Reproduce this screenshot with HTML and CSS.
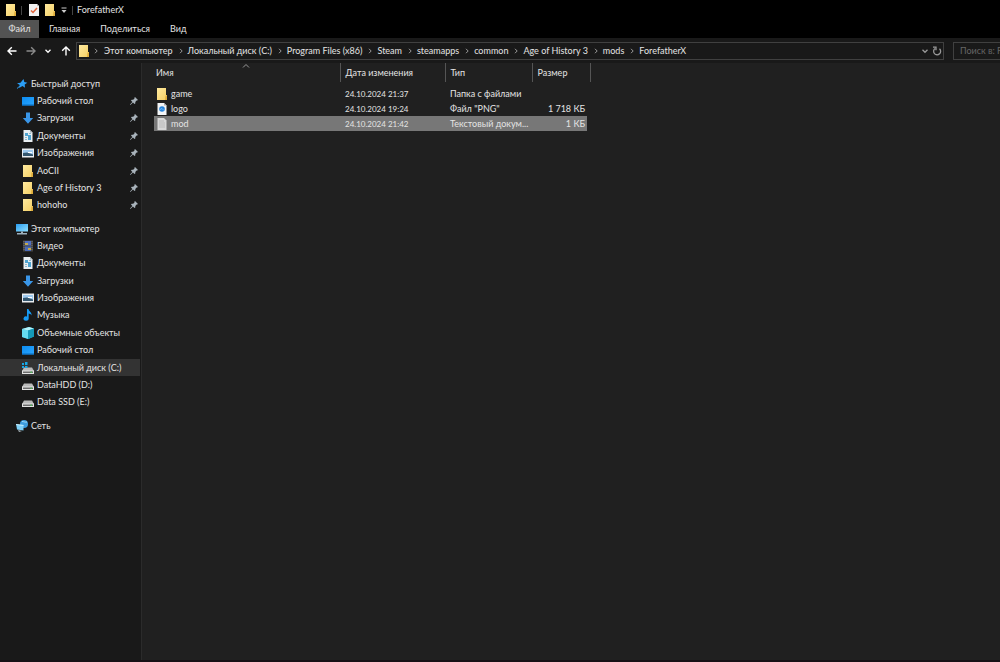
FILE: index.html
```html
<!DOCTYPE html>
<html lang="ru">
<head>
<meta charset="utf-8">
<title>ForefatherX</title>
<link rel="stylesheet" href="styles.css">
</head>
<body>
<svg class="defs" aria-hidden="true">
  <defs>
    <linearGradient id="gf" x1="0" y1="0" x2="1" y2="1"><stop offset="0" stop-color="#ffeaa0"/><stop offset="1" stop-color="#f5cf62"/></linearGradient>
    <linearGradient id="gb" x1="0" y1="0" x2="1" y2="1"><stop offset="0" stop-color="#0c8cf0"/><stop offset="1" stop-color="#2aa5ff"/></linearGradient>
    <linearGradient id="gm" x1="0" y1="0" x2="1" y2="1"><stop offset="0" stop-color="#2a9df0"/><stop offset="1" stop-color="#8fe0ff"/></linearGradient>
  </defs>
  <symbol id="folder" viewBox="0 0 12 12"><path d="M1 0h9v7h1v5H1z" fill="url(#gf)"/><path d="M9.500 7.500H11V12H9z" fill="#e0ae3c"/></symbol>
  <symbol id="check" viewBox="0 0 12 12"><path d="M1 0h8l2 2v10H1z" fill="#f1f1f1"/><path d="M9 0l2 2H9z" fill="#bbb"/><path d="M3 6.500l2 2 4-4.500" fill="none" stroke="#e2643c" stroke-width="1.500"/></symbol>
  <symbol id="star" viewBox="0 0 12 12"><path d="M7.500 1l.8 3 3 .7-2.600 1.800.3 3.200-2.500-1.700L3 10l.8-3L1 5.200l3.500-.5z" fill="#2b9df4"/><path d="M1 10.500l4-3.500" stroke="#2b9df4"/></symbol>
  <symbol id="desktop" viewBox="0 0 12 12"><path d="M0 2h12v8.500H0z" fill="url(#gb)"/><path d="M0 9.500h12v1H0z" fill="#0567b8"/></symbol>
  <symbol id="down" viewBox="0 0 12 12"><path d="M4 .5h4V6h3.200L6 11.800.8 6H4z" fill="#3a96e8"/></symbol>
  <symbol id="doc" viewBox="0 0 12 12"><path d="M1.500 0H8l2.500 2.500V12h-9z" fill="#e9eef1"/><path d="M8 0l2.500 2.500H8z" fill="#a9b4ba"/><path d="M3 3h3v3H3zM6 5h3v5H6z" fill="#4fa3cf"/><path d="M3 7.500h2M3 9.500h2M7 3.500h2" stroke="#8db7cb"/></symbol>
  <symbol id="image" viewBox="0 0 12 12"><path d="M0 1.500h12v9H0z" fill="#e9edf1"/><path d="M1 3h10v6H1z" fill="#9ec9ee"/><path d="M1 6l4-.5 6 2V9H1z" fill="#34566e"/><path d="M6 5h4v1H6z" fill="#fff"/></symbol>
  <symbol id="monitor" viewBox="0 0 12 12"><path d="M0 1h12v7.500H0z" fill="url(#gm)"/><path d="M5 8.500h2V10h4v1.500H1V10h4z" fill="#9eb1bd"/></symbol>
  <symbol id="video" viewBox="0 0 12 12"><path d="M1 .5h10v11H1z" fill="#454545"/><path d="M3 1h6v4.500H3z" fill="#4f6fc2"/><path d="M3 6.500h6V11H3z" fill="#4969b6"/><path d="M3 3h3v2H3zM6 8h3v2H6z" fill="#c5aa4b"/><path d="M2 1v10M10 1v10" stroke="#888" stroke-dasharray="1 1" stroke-width=".7"/></symbol>
  <symbol id="music" viewBox="0 0 12 12"><path d="M5 0h1.500c.3 2.500 3.500 3 3 6.500C9 5 7.500 4.700 6.700 4.500V9.500A2.600 2.200 0 1 1 5 7.600z" fill="#169bf5"/></symbol>
  <symbol id="cube" viewBox="0 0 12 12"><path d="M0 2l7-2 5 1.500v8L6.500 12 0 10z" fill="#25a8c8"/><path d="M0 2l6 1.500V12L0 10z" fill="#65dcf0"/><path d="M0 2l7-2 5 1.500-6 2z" fill="#b5f2fa"/><path d="M6 3.500l6-2v8L6 12z" fill="#159ab9"/></symbol>
  <symbol id="disk" viewBox="0 0 12 12"><path d="M2 4.500h8L12 8H0z" fill="#b9b9b9"/><path d="M0 7.500h12V11H0z" fill="#e2e2e2"/><path d="M1 8.500h10V10H1z" fill="#6c6c6c"/><path d="M8.500 8.500H10V10H8.500z" fill="#4db857"/></symbol>
  <symbol id="sysdisk" viewBox="0 0 12 12"><use href="#disk" width="12" height="12" y="1"/><path d="M0 1h2v2H0zM3 0h2.500v3H3zM0 4h2v2H0zM3 4h2.500v2H3z" fill="#17a7e5"/></symbol>
  <symbol id="network" viewBox="0 0 12 12"><circle cx="8" cy="4" r="4" fill="#3e9ddd"/><path d="M6 1.500c2 0 3 1 5 .5" stroke="#a5ddf8" fill="none"/><path d="M0 4l7.500 1v5.500L1 9.500z" fill="#7fd0f7"/><path d="M0 4l7.500 1v1L0 5z" fill="#c5edfc"/><path d="M2 10l4 1-3 1z" fill="#a8b4ba"/></symbol>
  <symbol id="png" viewBox="0 0 12 12"><path d="M1.500 0H8l2.500 2.500V12h-9z" fill="#f3f5f7"/><path d="M8 0l2.500 2.500H8z" fill="#aaa"/><circle cx="6" cy="6" r="2.800" fill="#2684dd"/><path d="M4 6.500l2-1 2 2" stroke="#6db8f8" fill="none"/></symbol>
  <symbol id="txt" viewBox="0 0 12 12"><path d="M1.500 0H8l2.500 2.500V12h-9z" fill="#d8d8d8"/><path d="M3 3h5M3 5h6M3 7h6M3 9h6" stroke="#b0b0b0" stroke-width=".7"/></symbol>
  <symbol id="pin" viewBox="0 0 8 8"><path d="M5 0l3 3-1 .6-.4-.1-1.300 1.400v1.500l-.8.700-1.500-1.600L.4 8 0 7.600 2.400 5 1 3.500l.7-.8h1.500L4.500 1.400 4.400.8z" fill="#a9b3bb"/></symbol>
  <symbol id="chev" viewBox="0 0 8 8"><path d="M3 1.800L5.200 4 3 6.200" fill="none" stroke="currentColor"/></symbol>
  <symbol id="vee" viewBox="0 0 8 8"><path d="M1.500 2.800L4 5.300l2.500-2.500" fill="none" stroke="currentColor" stroke-width="1.300"/></symbol>
  <symbol id="arrow" viewBox="0 0 10 10"><path d="M9.500 5H1M4.800 1.200L1 5l3.800 3.800" fill="none" stroke="currentColor" stroke-width="1.400"/></symbol>
</svg>

<div class="window">
  <header class="titlebar">
    <svg class="icon"><use href="#folder"/></svg>
    <span class="divider"></span>
    <button class="tool" aria-label="Свойства"><svg class="icon"><use href="#check"/></svg></button>
    <button class="tool" aria-label="Новая папка"><svg class="icon"><use href="#folder"/></svg></button>
    <button class="tool" aria-label="Настройка панели"><svg class="mini" viewBox="0 0 8 8"><path d="M1.500 2h5" stroke="#ccc"/><path d="M1.500 4h5L4 7z" fill="#ccc"/></svg></button>
    <span class="divider"></span>
    <h1 class="title">ForefatherX</h1>
  </header>

  <nav class="tabs">
    <button class="tab tab-file">Файл</button>
    <button class="tab">Главная</button>
    <button class="tab">Поделиться</button>
    <button class="tab">Вид</button>
  </nav>

  <div class="navrow">
    <div class="history">
      <button class="tool" aria-label="Назад"><svg class="arrow"><use href="#arrow"/></svg></button>
      <button class="tool dim" aria-label="Вперед"><svg class="arrow forward"><use href="#arrow"/></svg></button>
      <button class="tool recent" aria-label="Последние расположения"><svg class="mini"><use href="#vee"/></svg></button>
      <button class="tool" aria-label="Вверх"><svg class="arrow up"><use href="#arrow"/></svg></button>
    </div>
    <div class="address">
      <svg class="icon"><use href="#folder"/></svg>
      <ol class="crumbs">
        <li><svg class="mini"><use href="#chev"/></svg><a href="#">Этот компьютер</a></li>
        <li><svg class="mini"><use href="#chev"/></svg><a href="#">Локальный диск (C:)</a></li>
        <li><svg class="mini"><use href="#chev"/></svg><a href="#">Program Files (x86)</a></li>
        <li><svg class="mini"><use href="#chev"/></svg><a href="#">Steam</a></li>
        <li><svg class="mini"><use href="#chev"/></svg><a href="#">steamapps</a></li>
        <li><svg class="mini"><use href="#chev"/></svg><a href="#">common</a></li>
        <li><svg class="mini"><use href="#chev"/></svg><a href="#">Age of History 3</a></li>
        <li><svg class="mini"><use href="#chev"/></svg><a href="#">mods</a></li>
        <li><svg class="mini"><use href="#chev"/></svg><a href="#">ForefatherX</a></li>
      </ol>
      <button class="tool dim" aria-label="Предыдущие расположения"><svg class="mini"><use href="#vee"/></svg></button>
      <button class="tool dim" aria-label="Обновить"><svg class="refresh" viewBox="0 0 10 10"><path d="M3 2.500a3.500 3.500 0 1 0 4.500.2M1 1.200h3v3" fill="none" stroke="currentColor" stroke-width="1.300"/></svg></button>
    </div>
    <input class="search" type="text" aria-label="Поиск" placeholder="Поиск в: ForefatherX">
  </div>

  <div class="body">
    <aside class="sidebar">
      <ul class="group group-quick">
        <li><a class="place root" href="#"><svg class="icon"><use href="#star"/></svg>Быстрый доступ</a></li>
        <li><a class="place" href="#"><svg class="icon"><use href="#desktop"/></svg>Рабочий стол<svg class="pin"><use href="#pin"/></svg></a></li>
        <li><a class="place" href="#"><svg class="icon"><use href="#down"/></svg>Загрузки<svg class="pin"><use href="#pin"/></svg></a></li>
        <li><a class="place" href="#"><svg class="icon"><use href="#doc"/></svg>Документы<svg class="pin"><use href="#pin"/></svg></a></li>
        <li><a class="place" href="#"><svg class="icon"><use href="#image"/></svg>Изображения<svg class="pin"><use href="#pin"/></svg></a></li>
        <li><a class="place" href="#"><svg class="icon"><use href="#folder"/></svg>AoCII<svg class="pin"><use href="#pin"/></svg></a></li>
        <li><a class="place" href="#"><svg class="icon"><use href="#folder"/></svg>Age of History 3<svg class="pin"><use href="#pin"/></svg></a></li>
        <li><a class="place" href="#"><svg class="icon"><use href="#folder"/></svg>hohoho<svg class="pin"><use href="#pin"/></svg></a></li>
      </ul>
      <ul class="group group-pc">
        <li><a class="place root" href="#"><svg class="icon"><use href="#monitor"/></svg>Этот компьютер</a></li>
        <li><a class="place" href="#"><svg class="icon"><use href="#video"/></svg>Видео</a></li>
        <li><a class="place" href="#"><svg class="icon"><use href="#doc"/></svg>Документы</a></li>
        <li><a class="place" href="#"><svg class="icon"><use href="#down"/></svg>Загрузки</a></li>
        <li><a class="place" href="#"><svg class="icon"><use href="#image"/></svg>Изображения</a></li>
        <li><a class="place" href="#"><svg class="icon"><use href="#music"/></svg>Музыка</a></li>
        <li><a class="place" href="#"><svg class="icon"><use href="#cube"/></svg>Объемные объекты</a></li>
        <li><a class="place" href="#"><svg class="icon"><use href="#desktop"/></svg>Рабочий стол</a></li>
        <li><a class="place current" href="#"><svg class="icon"><use href="#sysdisk"/></svg>Локальный диск (C:)</a></li>
        <li><a class="place" href="#"><svg class="icon"><use href="#disk"/></svg>DataHDD (D:)</a></li>
        <li><a class="place" href="#"><svg class="icon"><use href="#disk"/></svg>Data SSD (E:)</a></li>
      </ul>
      <ul class="group group-net">
        <li><a class="place root" href="#"><svg class="icon"><use href="#network"/></svg>Сеть</a></li>
      </ul>
    </aside>

    <main class="files">
      <table class="list">
        <colgroup><col class="c-name"><col class="c-date"><col class="c-type"><col class="c-size"><col class="c-edge"></colgroup>
        <thead>
          <tr>
            <th scope="col" aria-sort="ascending">Имя<svg class="sort" viewBox="0 0 8 8"><path d="M1 5.500l3-3 3 3" fill="none" stroke="#999"/></svg></th>
            <th scope="col">Дата изменения</th>
            <th scope="col">Тип</th>
            <th scope="col" colspan="2">Размер</th>
          </tr>
        </thead>
        <tbody>
          <tr><td><span class="file"><svg class="icon"><use href="#folder"/></svg>game</span></td><td class="date">24.10.2024 21:37</td><td>Папка с файлами</td><td></td></tr>
          <tr><td><span class="file"><svg class="icon"><use href="#png"/></svg>logo</span></td><td class="date">24.10.2024 19:24</td><td>Файл "PNG"</td><td>1 718 КБ</td></tr>
          <tr class="selected"><td><span class="file"><svg class="icon"><use href="#txt"/></svg>mod</span></td><td class="date">24.10.2024 21:42</td><td>Текстовый докум...</td><td>1 КБ</td></tr>
        </tbody>
      </table>
    </main>
  </div>
</div>
</body>
</html>
```
FILE: styles.css
```css
* { box-sizing: border-box; }

body {
  margin: 0;
  background: #202020;
  color: #e4e4e4;
  font: 400 9px/14px Lato, "Noto Sans", sans-serif;
}

ul, ol { list-style: none; margin: 0; padding: 0; }
a { color: inherit; text-decoration: none; }
button { font: inherit; color: inherit; background: none; border: 0; padding: 0; }
svg { display: block; flex: none; }

.defs { position: absolute; width: 0; height: 0; }
.icon { width: 12px; height: 12px; }
.mini { width: 8px; height: 8px; }
.arrow { width: 10px; height: 10px; }
.forward { transform: rotate(180deg); }
.up { transform: rotate(90deg); }
.refresh { width: 10px; height: 10px; }

.window {
  display: flex;
  flex-direction: column;
  min-height: 100vh;
  overflow: hidden;
  border-bottom: 2px solid #171015;
}

.titlebar {
  display: flex;
  align-items: center;
  gap: 4px;
  height: 20px;
  padding-left: 5px;
  background: #000;
}
.divider { width: 1px; height: 9px; background: #444; }
.divider + .tool { margin-left: 2px; }
.title { margin: 0; font: inherit; }

.tabs { display: flex; height: 18px; background: #000; }
.tab { padding: 0 10px; }
.tab-file { width: 39px; padding: 0; background: #535353; }

.navrow {
  display: flex;
  align-items: center;
  height: 25px;
  background: #191919;
}
.history {
  display: flex;
  align-items: center;
  justify-content: space-between;
  width: 76px;
  padding: 0 5px 0 7px;
  color: #fff;
}
.history .dim { color: #8a8a8a; }
.address {
  display: flex;
  align-items: center;
  flex: 1;
  min-width: 0;
  height: 18px;
  padding: 0 1px;
  border: 1px solid #404040;
}
.crumbs {
  display: flex;
  flex: 1;
  min-width: 0;
  gap: 4px;
  padding-left: 2px;
  white-space: nowrap;
}
.crumbs li { display: flex; align-items: center; gap: 3px; }
.crumbs li:first-child { gap: 4px; }
.crumbs .mini { color: #999; }
.address .dim { color: #999; margin-left: 3px; }
.search {
  width: 47px;
  height: 18px;
  margin: 0 0 0 9px;
  padding: 0 0 0 6px;
  border: 1px solid #404040;
  border-right: 0;
  background: #191919;
  color: #dedede;
  font: inherit;
}
.search::placeholder { color: #666; opacity: 1; }

.body { display: flex; flex: 1; }

.sidebar {
  display: flex;
  flex-direction: column;
  gap: 6px;
  width: 142px;
  padding-top: 12px;
  background: #191919;
  border-right: 1px solid #2b2b2b;
}
.group { display: grid; grid-auto-rows: 1fr; }
.group-quick { height: 139px; }
.group-pc { height: 191px; }
.group-net { height: 17px; }
.place {
  display: flex;
  align-items: center;
  gap: 3px;
  height: 100%;
  margin-right: 1px;
  padding: 0 2px 0 22px;
  white-space: nowrap;
}
.root { padding-left: 16px; }
.current { background: #333; }
.pin { width: 8px; height: 8px; margin-left: auto; }

.files { flex: 1; min-width: 0; padding-left: 12px; }
.list { table-layout: fixed; width: 436px; border-collapse: collapse; }
.c-name { width: 186px; }
.c-date { width: 105px; }
.c-type { width: 87px; }
.c-size { width: 55px; }
.c-edge { width: 3px; }
th {
  position: relative;
  height: 19px;
  padding: 0 5px;
  border-right: 1px solid #555;
  font-weight: 400;
  text-align: left;
}
th:first-child { padding-left: 2px; }
thead::after { content: ""; display: block; height: 4px; }
.sort { position: absolute; top: -1px; left: 88px; width: 8px; height: 8px; }
td {
  height: 15px;
  padding: 0 0 0 5px;
  overflow: hidden;
  text-overflow: ellipsis;
  white-space: nowrap;
}
td:nth-child(4) { padding-right: 2px; text-align: right; }
.date { font-size: 8px; }
.file { display: flex; align-items: center; gap: 3px; }
td:first-child { padding-left: 2px; }
.selected td { background: #777; }
```
